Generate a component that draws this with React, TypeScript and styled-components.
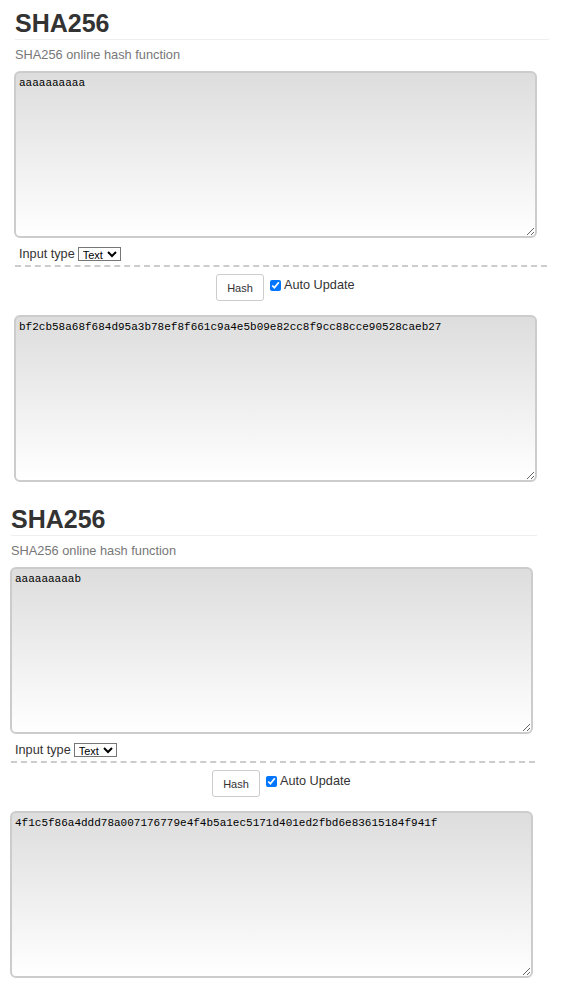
import React from "react";
import styled, { createGlobalStyle } from "styled-components";

const GlobalStyle = createGlobalStyle`
  body {
    margin: 0;
    background: #fff;
    font-family: "Liberation Sans", Arial, sans-serif;
    color: #333;
  }
`;

const Section = styled.section<{ $left: number; $width: number }>`
  width: ${(p) => p.$width}px;
  margin-left: ${(p) => p.$left}px;
  padding-top: 8px;
  padding-bottom: 14px;
`;

const Title = styled.h1`
  margin: 0;
  font-size: 25px;
  line-height: 30px;
  font-weight: bold;
  color: #333;
  padding-bottom: 1px;
  border-bottom: 1px solid #eee;
`;

const Subtitle = styled.p`
  margin: 7px 0 8px;
  font-size: 12.8px;
  line-height: 16px;
  color: #777;
`;

const HashBox = styled.textarea`
  display: block;
  box-sizing: border-box;
  width: 523px;
  height: 167px;
  margin: 0 0 0 -1px;
  padding: 3px 3px;
  border: 2px solid #ccc;
  border-radius: 6px;
  background: linear-gradient(to bottom, #dddddd, #ffffff);
  font-family: "Liberation Mono", "DejaVu Sans Mono", monospace;
  font-size: 11px;
  line-height: 14px;
  color: #000;
  outline: none;
`;

const OptionRow = styled.div`
  display: flex;
  align-items: center;
  gap: 3px;
  height: 24px;
  padding: 7px 0 0 4px;
  box-sizing: border-box;
  font-size: 12.7px;
`;

const Label = styled.span`
  color: #333;
`;

const TypeSelect = styled.select`
  font-family: "Liberation Sans", Arial, sans-serif;
  font-size: 11px;
  height: 14px;
  padding: 0;
  border: 1px solid #767676;
  border-radius: 0;
  background: #fff;
  color: #000;
`;

const Divider = styled.div`
  margin-top: 3px;
  border-top: 2px dashed #ccc;
  margin-right: 2px;
`;

const ActionRow = styled.div`
  display: flex;
  align-items: center;
  gap: 6px;
  padding: 7px 0 14px 201px;
`;

const HashButton = styled.button`
  width: 48px;
  height: 27px;
  background: #fff;
  border: 1px solid #ccc;
  border-radius: 3px;
  font-family: "Liberation Sans", Arial, sans-serif;
  font-size: 11px;
  color: #333;
  padding: 0;
`;

const Check = styled.label`
  display: flex;
  align-items: center;
  align-self: flex-start;
  margin-top: 4px;
  gap: 1px;
  font-size: 12.7px;
  color: #333;

  input {
    margin: 0 2px 0 0;
    width: 11px;
    height: 11px;
  }
`;

type HasherProps = {
  left: number;
  width: number;
  input: string;
  hash: string;
};

const Hasher = ({ left, width, input, hash }: HasherProps) => {
  return (
    <Section $left={left} $width={width}>
      <Title>SHA256</Title>
      <Subtitle>SHA256 online hash function</Subtitle>
      <HashBox defaultValue={input} spellCheck={false} />
      <OptionRow>
        <Label>Input type</Label>
        <TypeSelect defaultValue="text">
          <option value="text">Text</option>
          <option value="hex">Hex</option>
        </TypeSelect>
      </OptionRow>
      <Divider />
      <ActionRow>
        <HashButton>Hash</HashButton>
        <Check>
          <input type="checkbox" defaultChecked />
          Auto Update
        </Check>
      </ActionRow>
      <HashBox defaultValue={hash} spellCheck={false} readOnly />
    </Section>
  );
};

export default function App() {
  return (
    <>
      <GlobalStyle />
      <Hasher
        left={15}
        width={534}
        input="aaaaaaaaaa"
        hash="bf2cb58a68f684d95a3b78ef8f661c9a4e5b09e82cc8f9cc88cce90528caeb27"
      />
      <Hasher
        left={11}
        width={526}
        input="aaaaaaaaab"
        hash="4f1c5f86a4ddd78a007176779e4f4b5a1ec5171d401ed2fbd6e83615184f941f"
      />
    </>
  );
}
